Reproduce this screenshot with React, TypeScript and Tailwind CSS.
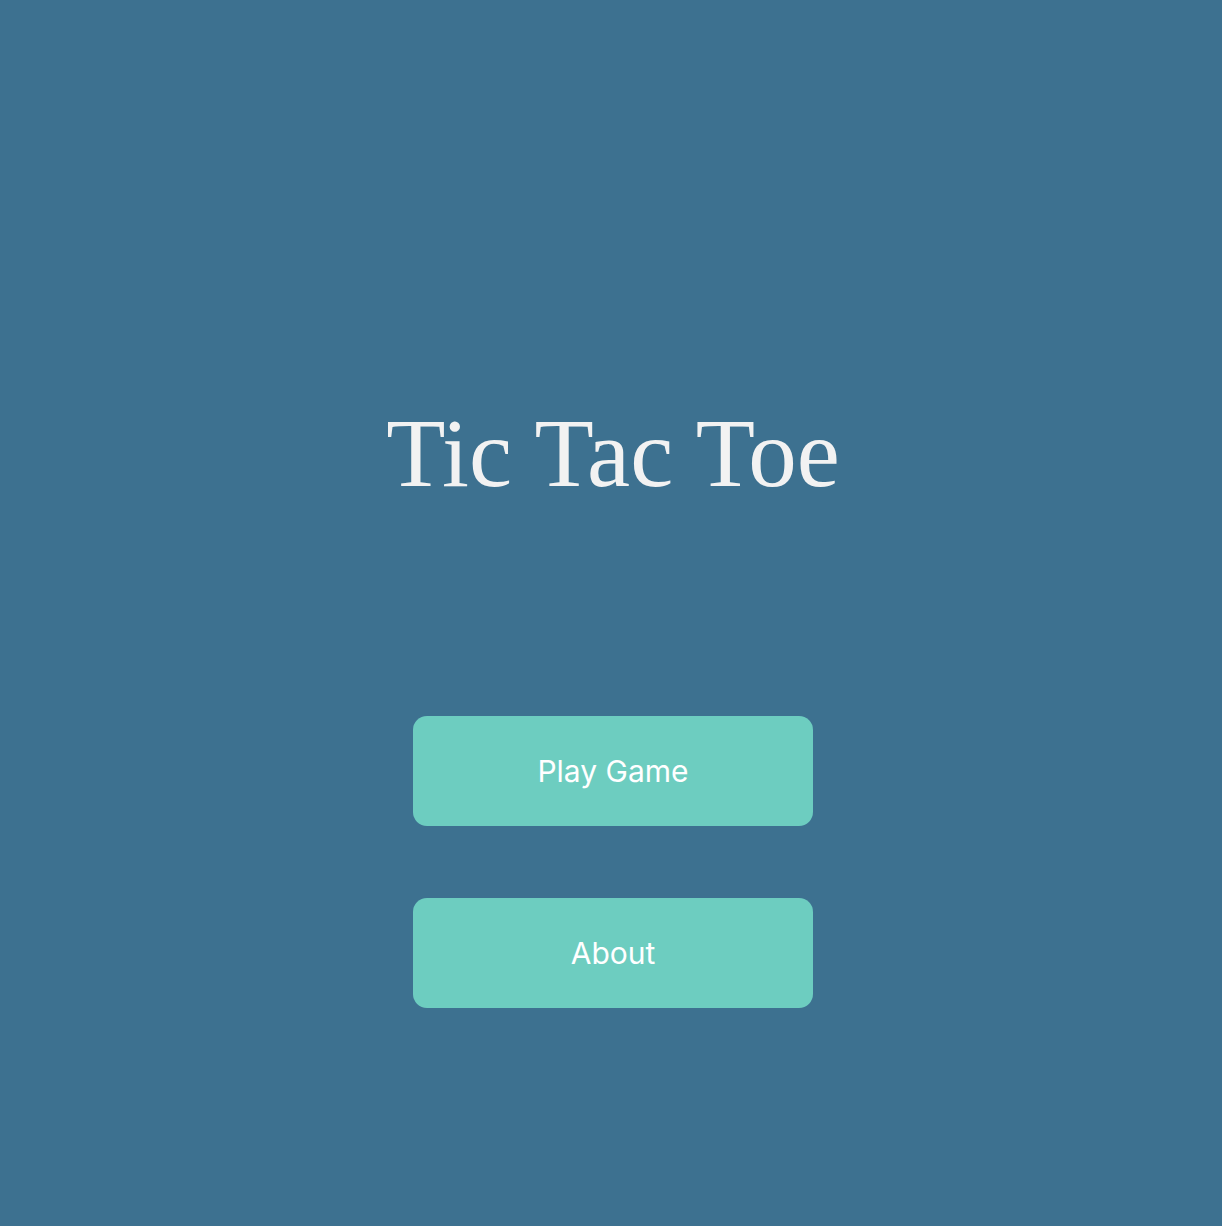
export default function App() {
  return (
    <div className="min-h-[1226px] w-full bg-[#3d7190] flex flex-col items-center pl-1">
      <h1 className="mt-[405px] text-[97px] leading-none text-[#f2f2f2] font-normal font-['Liberation_Serif','Times_New_Roman',serif]">
        Tic Tac Toe
      </h1>
      <div className="mt-[214px] flex flex-col gap-[72px]">
        <button className="w-[400px] h-[110px] rounded-[14px] bg-[#6dcdc0] text-white text-[30px] font-['Inter','Noto_Sans',sans-serif]">
          Play Game
        </button>
        <button className="w-[400px] h-[110px] rounded-[14px] bg-[#6dcdc0] text-white text-[30px] font-['Inter','Noto_Sans',sans-serif]">
          About
        </button>
      </div>
    </div>
  );
}
